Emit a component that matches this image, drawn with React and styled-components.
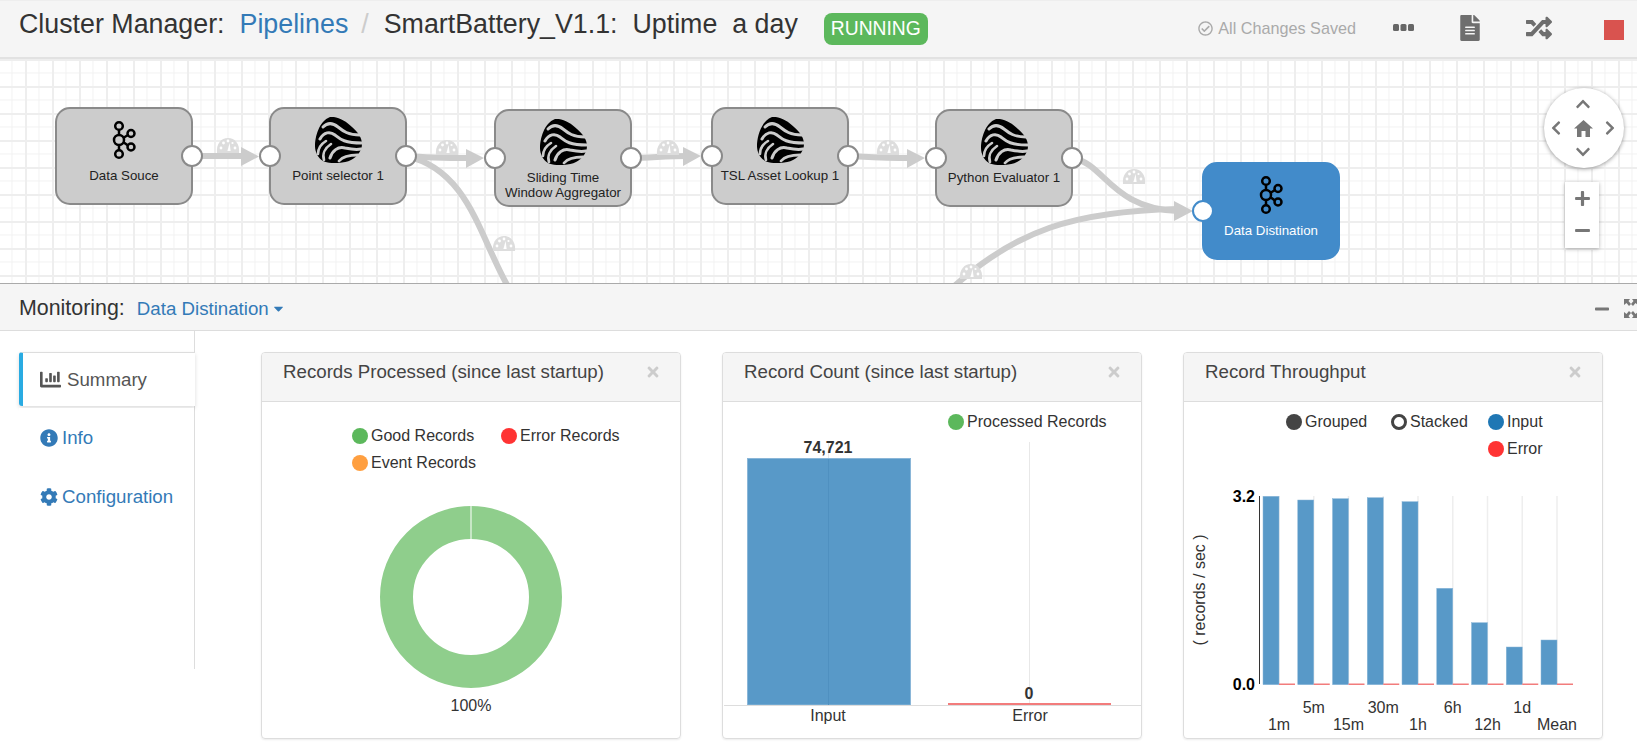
import React from 'react'
import styled, { createGlobalStyle } from 'styled-components'
import {
  FaCaretDown, FaChartBar, FaChevronDown, FaChevronLeft, FaChevronRight, FaChevronUp, FaCog,
  FaFileAlt, FaInfoCircle, FaMinus, FaPlus, FaRandom, FaRegCheckCircle, FaTimes,
} from 'react-icons/fa'

const GlobalStyle = createGlobalStyle`
  html, body { margin: 0; padding: 0; background: #fff; }
  body {
    width: 1637px;
    height: 745px;
    overflow: hidden;
    font-family: "Liberation Sans", Arial, sans-serif;
    color: #333;
  }
  * { box-sizing: border-box; }
`

const Page = styled.div`
  width: 1637px;
  height: 745px;
  overflow: hidden;
`

/* top bar */
const TopBar = styled.header`
  height: 59px;
  padding: 0 13px 9px 19px;
  display: flex;
  align-items: center;
  background: #f5f5f5;
  border-top: 1px solid #eee;
  border-bottom: 2px solid #e2e2e2;
  font-size: 26.8px;
  white-space: pre;
`
const TitleLink = styled.a`
  color: #337ab7;
  margin-left: 15px;
`
const Slash = styled.span`
  color: #ccc;
  margin: 0 15px 0 13px;
`
const Status = styled.span`
  margin-left: 26px;
  margin-top: 9px;
  width: 104px;
  height: 32px;
  display: flex;
  align-items: center;
  justify-content: center;
  border-radius: 8px;
  background: #5cb85c;
  color: #fff;
  font-size: 19.3px;
`
const TopActions = styled.div`
  margin-left: auto;
  margin-top: 7px;
  display: flex;
  align-items: center;
  color: #6e6e6e;
`
const Saved = styled.span`
  display: flex;
  align-items: center;
  gap: 5px;
  margin-right: 37px;
  font-size: 16.2px;
  color: #aaa;
`
const ActionIcon = styled.span`
  display: flex;
  margin-right: ${p => p.$gap}px;
  font-size: ${p => p.$size}px;
`
const StopButton = styled.span`
  width: 20px;
  height: 20px;
  margin-top: 3px;
  background: #d9534f;
`

/* pipeline canvas */
const Canvas = styled.section`
  position: relative;
  height: 224px;
  overflow: hidden;
  background-color: #fff;
  background-image:
    linear-gradient(#eee 2px, transparent 2px),
    linear-gradient(90deg, #eee 2px, transparent 2px),
    linear-gradient(#f1f1f1 1px, transparent 1px),
    linear-gradient(90deg, #f1f1f1 1px, transparent 1px);
  background-size: 27px 27px, 27px 27px, 13.5px 13.5px, 13.5px 13.5px;
  background-position: 0 0, -2px 0, 0 0, -2px 0;
`
const Edges = styled.svg`
  position: absolute;
  inset: 0;
  display: block;
`
const Node = styled.div`
  position: absolute;
  left: ${p => p.$x}px;
  top: ${p => p.$y}px;
  width: ${p => p.$w}px;
  height: 98px;
  padding-top: 8px;
  display: flex;
  flex-direction: column;
  align-items: center;
  border: 2px solid ${p => (p.$target ? '#428bca' : '#8a8a8a')};
  border-radius: 15px;
  background: ${p => (p.$target ? '#428bca' : '#ccc')};
  color: ${p => (p.$target ? '#fff' : '#222')};
`
const NodeIcon = styled.div`
  height: 46px;
  display: flex;
  align-items: center;
  justify-content: center;
`
const NodeLabel = styled.div`
  margin-top: 5px;
  font-size: 13.3px;
  line-height: 15px;
  text-align: center;
  white-space: pre;
`
const Port = styled.span`
  position: absolute;
  top: 36px;
  ${p => (p.$side === 'in' ? 'left: -12px;' : 'right: -12px;')}
  width: 22px;
  height: 22px;
  border-radius: 50%;
  background: #fff;
  border: 2px solid ${p => (p.$target ? '#428bca' : '#8a8a8a')};
`
const NavPad = styled.div`
  position: absolute;
  left: 1544px;
  top: 29px;
  width: 80px;
  height: 80px;
  padding-right: 2px;
  display: grid;
  grid-template-columns: repeat(3, 27px);
  grid-template-rows: repeat(3, 24px);
  place-content: center;
  place-items: center;
  border-radius: 50%;
  background: #fff;
  color: #777;
  font-size: 16px;
  box-shadow: 0 1px 4px rgba(0, 0, 0, 0.4);
`
const NavCell = styled.span`
  display: flex;
  grid-column: ${p => p.$col};
  grid-row: ${p => p.$row};
`
const ZoomBox = styled.div`
  position: absolute;
  left: 1565px;
  top: 123px;
  width: 34px;
  height: 66px;
  padding-bottom: 2px;
  display: flex;
  flex-direction: column;
  background: #fff;
  color: #777;
  font-size: 17px;
  box-shadow: 0 1px 4px rgba(0, 0, 0, 0.3);
`
const ZoomButton = styled.span`
  flex: 1;
  display: flex;
  align-items: center;
  justify-content: center;
`

/* monitoring bar */
const MonitorBar = styled.div`
  height: 48px;
  padding: 3px 0 0 19px;
  display: flex;
  align-items: center;
  background: #f5f5f5;
  border-top: 1px solid #aaa;
  border-bottom: 1px solid #ddd;
  font-size: 21.4px;
`
const MonitorSelect = styled.a`
  display: flex;
  align-items: center;
  margin-left: 12px;
  gap: 2px;
  font-size: 18.7px;
  color: #337ab7;
`
const MonitorTools = styled.div`
  margin-left: auto;
  display: flex;
  align-items: center;
  gap: 14px;
  color: #777;
  margin-right: -1px;
`

/* lower area */
const Lower = styled.main`
  display: flex;
  align-items: flex-start;
`
const TabList = styled.nav`
  flex: none;
  width: 176px;
  height: 338px;
  margin-left: 19px;
  padding-top: 21px;
  border-right: 1px solid #ddd;
`
const Tab = styled.a`
  height: ${p => (p.$active ? 54 : 59)}px;
  margin-bottom: ${p => (p.$active ? 2 : 0)}px;
  margin-right: ${p => (p.$active ? -1 : 0)}px;
  padding-left: ${p => (p.$active ? 17 : 21)}px;
  display: flex;
  align-items: center;
  gap: ${p => (p.$active ? 6 : 4)}px;
  font-size: 18.7px;
  background: #fff;
  color: ${p => (p.$active ? '#555' : '#337ab7')};
  ${p =>
    p.$active &&
    `border-left: 4px solid #29abe2;
     border-top: 1px solid #ddd;
     border-radius: 3px 0 0 3px;
     box-shadow: 0 2px 4px rgba(0, 0, 0, 0.14);`}
`
const Cards = styled.div`
  margin-left: 66px;
  padding-top: 21px;
  display: grid;
  grid-template-columns: repeat(3, 420px);
  column-gap: 41px;
`
const Card = styled.article`
  height: 387px;
  display: flex;
  flex-direction: column;
  border: 1px solid #ddd;
  border-radius: 4px;
  box-shadow: 0 1px 2px rgba(0, 0, 0, 0.08);
  overflow: hidden;
`
const CardHead = styled.div`
  flex: none;
  height: 49px;
  padding: 0 21px 10px;
  display: flex;
  align-items: center;
  justify-content: space-between;
  background: #f5f5f5;
  border-bottom: 1px solid #ddd;
  font-size: 18.7px;
  color: #444;
`
const CloseIcon = styled.span`
  display: flex;
  margin-right: -2px;
  font-size: 16px;
  color: #ccc;
`
const Legend = styled.div`
  flex: none;
  display: grid;
  grid-template-columns: ${p => p.$cols};
  grid-auto-rows: 27.5px;
  padding: ${p => p.$pad};
`
const LegendItem = styled.span`
  display: flex;
  align-items: center;
  gap: 3px;
  font-size: 16px;
  grid-column: ${p => p.$col || 'auto'};
`
const Dot = styled.i`
  flex: none;
  width: 16px;
  height: 16px;
  border-radius: 50%;
  background: ${p => (p.$hollow ? '#fff' : p.$color)};
  border: ${p => (p.$hollow ? `3px solid ${p.$color}` : 'none')};
`
const DonutWrap = styled.div`
  display: flex;
  flex-direction: column;
  align-items: center;
  margin-top: 29px;
  font-size: 16px;
`
const DonutLabel = styled.div`
  margin-top: 9px;
  line-height: 18px;
`
const ChartSvg = styled.svg`
  flex: none;
  display: block;
  margin-left: 1px;
  font-family: "Liberation Sans", Arial, sans-serif;
  font-size: 16px;
  fill: #333;
`

/* drawings */
const Kafka = () => (
  <svg width="26" height="40" viewBox="-8 -20 26 40" fill="none" stroke="#000" strokeWidth="2.5">
    <path d="M0 -10V-5M0 5V10M4.5 -2.2L9 -5M4.5 2.2L9 5.5" />
    <circle cx="0" cy="-14" r="3.8" />
    <circle cx="0" cy="0" r="5" />
    <circle cx="0" cy="14" r="3.8" />
    <circle cx="12" cy="-6.5" r="3.5" />
    <circle cx="12" cy="7" r="3.5" />
  </svg>
)

const Swirl = () => (
  <svg width="47" height="46" viewBox="0 0 47 46">
    <path
      d="M15 0C22 -1 31 4 37 10C43 15 47 21 47 27C47 34 42 40 36 43C28 47 14 47 8 44C3 41 0 35 0 29C0 20 4 4 15 0Z"
      fill="#000"
    />
    <g fill="none" stroke="#ccc" strokeLinecap="round">
      <path d="M8 10C13 5 18 6 23 10C28 14 33 18 45 18" strokeWidth="3" />
      <path d="M5 22C9 15 15 14 20 18C25 22 29 26 47 26" strokeWidth="3" />
      <path d="M15 41C17 34 23 29 30 31C35 32 41 33 46 32" strokeWidth="3" />
      <path d="M24 44C28 39 34 38 43 38" strokeWidth="2.8" />
      <path d="M3 37C3 31 6 27 11 24" strokeWidth="2.6" />
      <path d="M9 43C7 37 10 31 16 27" strokeWidth="2.6" />
    </g>
  </svg>
)

const Gauge = ({ x, y }) => (
  <g transform={`translate(${x} ${y})`}>
    <path d="M-11 7C-12 -2 -7 -8 0 -8C7 -8 12 -2 11 7Z" fill="#ddd" />
    <g fill="#fff">
      <circle cx="-7" cy="2" r="1.4" />
      <circle cx="-4.5" cy="-3" r="1.4" />
      <circle cx="0" cy="-5" r="1.4" />
      <circle cx="7" cy="2" r="1.4" />
      <circle cx="4.5" cy="-3" r="1.1" />
      <path d="M1.6 -3L2.6 5H-0.6Z" />
    </g>
  </g>
)

const HomeIcon = () => (
  <svg width="19" height="17" viewBox="0 0 19 17" fill="#777">
    <path d="M9.5 0L19 8.5H16V17H11.5V11H7.5V17H3V8.5H0Z" />
  </svg>
)

const Dots = () => (
  <svg width="21" height="10" viewBox="0 0 21 10" fill="#666">
    <rect x="0" y="1" width="6" height="7" rx="1.5" />
    <rect x="7.5" y="1" width="6" height="7" rx="1.5" />
    <rect x="15" y="1" width="6" height="7" rx="1.5" />
  </svg>
)

const ExpandIcon = () => (
  <svg width="14" height="19" viewBox="0 0 14 19" fill="#777" style={{ flex: 'none' }}>
    <path d="M0 0H6L4.5 2L7 5L5 7L2.5 4L0 6Z" />
    <path d="M0 19H6L4.5 17L7 14L5 12L2.5 15L0 13Z" />
    <path d="M14 19H8L9.5 17L7 14L9 12L11.5 15L14 13Z" />
    <path d="M14 0H8L9.5 2L7 5L9 7L11.5 4L14 6Z" />
  </svg>
)

const NODES = [
  { x: 55, y: 48, w: 138, label: 'Data Souce', icon: 'kafka', in: false },
  { x: 269, y: 48, w: 138, label: 'Point selector 1', icon: 'swirl' },
  { x: 494, y: 50, w: 138, label: 'Sliding Time\nWindow Aggregator', icon: 'swirl' },
  { x: 711, y: 48, w: 138, label: 'TSL Asset Lookup 1', icon: 'swirl' },
  { x: 935, y: 50, w: 138, label: 'Python Evaluator 1', icon: 'swirl' },
  { x: 1202, y: 103, w: 138, label: 'Data Distination', icon: 'kafka', target: true },
]

const EDGES = [
  'M192 156L245 156',
  'M406 156C430 158 440 158 470 158',
  'M631 158C650 158 665 156 687 156',
  'M849 156C870 157 885 158 911 158',
  'M1072 158C1105 163 1110 208 1178 211',
  'M406 156C470 170 480 240 510 290',
  'M950 290C1015 230 1075 211 1178 209',
]
const ARROWS = [
  '241,147 259,156.5 241,166',
  '466,149 484,158 466,168',
  '683,147 701,156 683,166',
  '907,149 925,158 907,168',
  '1174,201 1193,211 1174,221',
]
const GAUGES = [[228, 146], [447, 148], [668, 148], [888, 148], [1134, 177], [504, 244], [971, 272]]

const THROUGHPUT = [
  { label: '1m', top: 33.3 },
  { label: '5m', top: 37 },
  { label: '15m', top: 35.7 },
  { label: '30m', top: 34.7 },
  { label: '1h', top: 38.7 },
  { label: '6h', top: 125.3 },
  { label: '12h', top: 159.7 },
  { label: '1d', top: 184 },
  { label: 'Mean', top: 177 },
]

function Pipeline() {
  return (
    <Canvas>
      <Edges width="1637" height="224" viewBox="0 59 1637 224">
        {EDGES.map(d => (
          <path key={d} d={d} fill="none" stroke="#ccc" strokeWidth="6" />
        ))}
        {ARROWS.map(p => (
          <polygon key={p} points={p} fill="#ccc" />
        ))}
        {GAUGES.map(([x, y]) => (
          <Gauge key={x} x={x} y={y} />
        ))}
      </Edges>
      {NODES.map(n => (
        <Node key={n.label} $x={n.x} $y={n.y} $w={n.w} $target={n.target}>
          <NodeIcon>{n.icon === 'kafka' ? <Kafka /> : <Swirl />}</NodeIcon>
          <NodeLabel>{n.label}</NodeLabel>
          {n.in !== false && <Port $side="in" $target={n.target} />}
          {!n.target && <Port $side="out" />}
        </Node>
      ))}
      <NavPad>
        <NavCell $col={2} $row={1}><FaChevronUp /></NavCell>
        <NavCell $col={1} $row={2}><FaChevronLeft /></NavCell>
        <NavCell $col={2} $row={2}><HomeIcon /></NavCell>
        <NavCell $col={3} $row={2}><FaChevronRight /></NavCell>
        <NavCell $col={2} $row={3}><FaChevronDown /></NavCell>
      </NavPad>
      <ZoomBox>
        <ZoomButton><FaPlus /></ZoomButton>
        <ZoomButton><FaMinus /></ZoomButton>
      </ZoomBox>
    </Canvas>
  )
}

function DonutCard() {
  return (
    <Card>
      <CardHead>
        Records Processed (since last startup)
        <CloseIcon><FaTimes /></CloseIcon>
      </CardHead>
      <Legend $cols="149px 150px" $pad="20px 0 0 90px">
        <LegendItem><Dot $color="#5cb85c" />Good Records</LegendItem>
        <LegendItem><Dot $color="#ff3333" />Error Records</LegendItem>
        <LegendItem><Dot $color="#ff9f40" />Event Records</LegendItem>
      </Legend>
      <DonutWrap>
        <svg width="182" height="182" viewBox="-91 -91 182 182">
          <circle r="74.5" fill="none" stroke="#8fce8c" strokeWidth="33" />
          <rect x="-0.5" y="-91" width="1" height="33" fill="#fff" />
        </svg>
        <DonutLabel>100%</DonutLabel>
      </DonutWrap>
    </Card>
  )
}

function CountCard() {
  return (
    <Card>
      <CardHead>
        Record Count (since last startup)
        <CloseIcon><FaTimes /></CloseIcon>
      </CardHead>
      <Legend $cols="auto" $pad="6px 0 0 225px">
        <LegendItem><Dot $color="#5cb85c" />Processed Records</LegendItem>
      </Legend>
      <ChartSvg width="417" height="300" viewBox="0 0 417 300">
        <path d="M104.5 6V269M305.5 6V269" stroke="#e8e8e8" />
        <rect x="23.5" y="22.5" width="163" height="246.5" fill="#5899c8" stroke="#8ab6d8" />
        <path d="M104.5 23V269" stroke="#4f90c0" />
        <rect x="224" y="267" width="163" height="2" fill="#f27c7c" />
        <path d="M-1 269.5H417" stroke="#ddd" />
        <text x="104" y="17" textAnchor="middle" fontWeight="bold">74,721</text>
        <text x="305" y="263" textAnchor="middle" fontWeight="bold">0</text>
        <text x="104" y="285" textAnchor="middle">Input</text>
        <text x="306" y="285" textAnchor="middle">Error</text>
      </ChartSvg>
    </Card>
  )
}

function ThroughputCard() {
  return (
    <Card>
      <CardHead>
        Record Throughput
        <CloseIcon><FaTimes /></CloseIcon>
      </CardHead>
      <Legend $cols="105px 97px auto" $pad="6px 0 0 102px">
        <LegendItem><Dot $color="#444" />Grouped</LegendItem>
        <LegendItem><Dot $color="#444" $hollow />Stacked</LegendItem>
        <LegendItem><Dot $color="#1f77b4" />Input</LegendItem>
        <LegendItem $col={3}><Dot $color="#ff3333" />Error</LegendItem>
      </Legend>
      <ChartSvg width="417" height="273" viewBox="0 0 417 273">
        {THROUGHPUT.map((b, i) => {
          const x = 78 + i * 34.75
          return (
            <g key={b.label}>
              <path d={`M${x + 16} 33V221`} stroke="#eee" strokeWidth="1.5" />
              <rect x={x} y={b.top} width="16" height={221.7 - b.top} fill="#5899c8" stroke="#8ab6d8" strokeWidth="0.5" />
              <rect x={x + 16} y="220.5" width="16" height="1.5" fill="#f27c7c" />
              <text x={x + 16} y={i % 2 ? 250 : 267} textAnchor="middle">{b.label}</text>
            </g>
          )
        })}
        <path d="M74.5 33V221" stroke="#333" />
        <text x="70" y="39" textAnchor="end" fontWeight="bold" fill="#000">3.2</text>
        <text x="70" y="227" textAnchor="end" fontWeight="bold" fill="#000">0.0</text>
        <text x="0" y="0" textAnchor="middle" transform="translate(20 127) rotate(-90)">( records / sec )</text>
      </ChartSvg>
    </Card>
  )
}

export default function App() {
  return (
    <Page>
      <GlobalStyle />
      <TopBar>
        <span>Cluster Manager:</span>
        <TitleLink>Pipelines</TitleLink>
        <Slash>/</Slash>
        <span>{'SmartBattery_V1.1:  Uptime  a day'}</span>
        <Status>RUNNING</Status>
        <TopActions>
          <Saved><FaRegCheckCircle size={15} />All Changes Saved</Saved>
          <ActionIcon $gap={43} $size={21}><Dots /></ActionIcon>
          <ActionIcon $gap={43} $size={26}><FaFileAlt /></ActionIcon>
          <ActionIcon $gap={52} $size={26}><FaRandom /></ActionIcon>
          <StopButton />
        </TopActions>
      </TopBar>
      <Pipeline />
      <MonitorBar>
        <span>Monitoring:</span>
        <MonitorSelect>Data Distination <FaCaretDown size={15} /></MonitorSelect>
        <MonitorTools>
          <FaMinus size={16} />
          <ExpandIcon />
        </MonitorTools>
      </MonitorBar>
      <Lower>
        <TabList>
          <Tab $active><FaChartBar size={21} />Summary</Tab>
          <Tab><FaInfoCircle size={18} />Info</Tab>
          <Tab><FaCog size={18} />Configuration</Tab>
        </TabList>
        <Cards>
          <DonutCard />
          <CountCard />
          <ThroughputCard />
        </Cards>
      </Lower>
    </Page>
  )
}
